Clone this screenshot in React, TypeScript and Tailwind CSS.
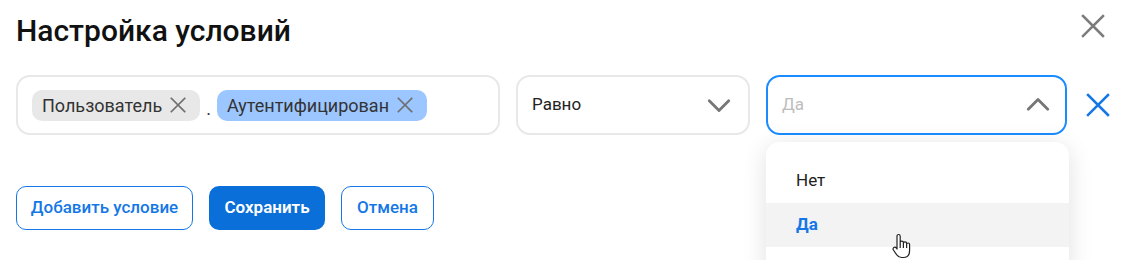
import React from 'react';

const XIcon = ({ className = '' }: { className?: string }) => (
  <svg className={className} viewBox="0 0 24 24" fill="none" stroke="currentColor" strokeWidth="2" strokeLinecap="square">
    <path d="M4 4L20 20M20 4L4 20" />
  </svg>
);

const Chevron = ({ up = false }: { up?: boolean }) => (
  <svg className="w-[26px] h-[26px] text-[#767676]" viewBox="0 0 24 24" fill="none" stroke="currentColor" strokeWidth="2.6" strokeLinecap="round" strokeLinejoin="round">
    <path d={up ? 'M3 16L12 7L21 16' : 'M3 8L12 17L21 8'} />
  </svg>
);

const Chip = ({ label, blue = false }: { label: string; blue?: boolean }) => (
  <div className={`flex items-center h-[31px] rounded-[10px] pl-[10px] pr-[12px] gap-[6px] text-[18px] text-[#333] ${blue ? 'bg-[#9cc6ff]' : 'bg-[#e8e8e8]'}`}>
    <span>{label}</span>
    <XIcon className="w-[20px] h-[20px] text-[#6f6f6f]" />
  </div>
);

const HandCursor = () => (
  <svg className="absolute left-[891px] top-[233px] w-[22px] h-[26px]" viewBox="0 0 22 26" fill="white" stroke="#222" strokeWidth="1.2" strokeLinejoin="round">
    <path d="M6 14V3.2C6 2.2 6.8 1.5 7.6 1.5S9.2 2.2 9.2 3.2V11.5V9.6C9.2 8.7 10 8.1 10.8 8.1S12.4 8.7 12.4 9.6V12V10.4C12.4 9.5 13.2 8.9 14 8.9S15.6 9.5 15.6 10.4V12.6V11.4C15.6 10.6 16.3 10 17.1 10S18.6 10.6 18.6 11.4V17.5C18.6 21.5 16.5 24.5 12.5 24.5H10.5C8.3 24.5 7 23.5 5.6 21.6L2.4 17C1.8 16.1 2 15 2.8 14.5C3.6 14 4.6 14.2 5.2 15L6 16Z" />
    <path d="M9.2 11.5V15M12.4 12V15M15.6 12.6V15" fill="none" />
  </svg>
);

export default function App() {
  return (
    <div className="relative w-[1129px] h-[260px] overflow-hidden bg-white px-4 font-['Roboto',sans-serif]">
      <div className="flex items-start justify-between pt-[13px]">
        <h1 className="text-[30px] leading-[36px] font-medium text-[#111]">Настройка условий</h1>
        <XIcon className="mt-[-2px] mr-[5px] w-[30px] h-[30px] text-[#7c7c7c]" />
      </div>

      <div className="flex items-center gap-4 mt-[26px]">
        <div className="flex items-center w-[484px] h-[60px] border-2 border-[#e8e8e8] rounded-[14px] px-[14px] gap-[6px]">
          <Chip label="Пользователь" />
          <span className="text-[18px] text-[#333] mt-[6px]">.</span>
          <Chip label="Аутентифицирован" blue />
        </div>
        <div className="flex items-center justify-between w-[234px] h-[60px] border-2 border-[#e8e8e8] rounded-[14px] pl-[14px] pr-[16px]">
          <span className="text-[17px] text-[#222]">Равно</span>
          <Chevron />
        </div>
        <div className="flex items-center justify-between w-[301px] h-[60px] border-2 border-[#1a8cff] rounded-[14px] pl-[14px] pr-[14px]">
          <span className="text-[17px] text-[#bdbdbd]">Да</span>
          <Chevron up />
        </div>
        <XIcon className="ml-0 w-[30px] h-[30px] text-[#1577e6]" />
      </div>

      <div className="flex items-center gap-4 mt-[51px]">
        <button className="h-[44px] w-[177px] rounded-[10px] border border-[#1577e6] text-[17px] font-medium text-[#1577e6]">Добавить условие</button>
        <button className="h-[44px] w-[116px] rounded-[10px] bg-[#0b6fd9] text-[17px] font-semibold text-white">Сохранить</button>
        <button className="h-[44px] w-[93px] rounded-[10px] border border-[#1577e6] text-[17px] font-medium text-[#1577e6]">Отмена</button>
      </div>

      <div className="absolute left-[766px] top-[142px] w-[303px] h-[140px] rounded-[14px] bg-white shadow-[0_4px_24px_rgba(0,0,0,0.12)] pt-[16px]">
        <div className="flex items-center h-[45px] pl-[30px] text-[17px] text-[#222]">Нет</div>
        <div className="flex items-center h-[44px] pl-[30px] text-[17px] font-bold text-[#1577e6] bg-[#f3f3f3]">Да</div>
      </div>
      <HandCursor />
    </div>
  );
}
